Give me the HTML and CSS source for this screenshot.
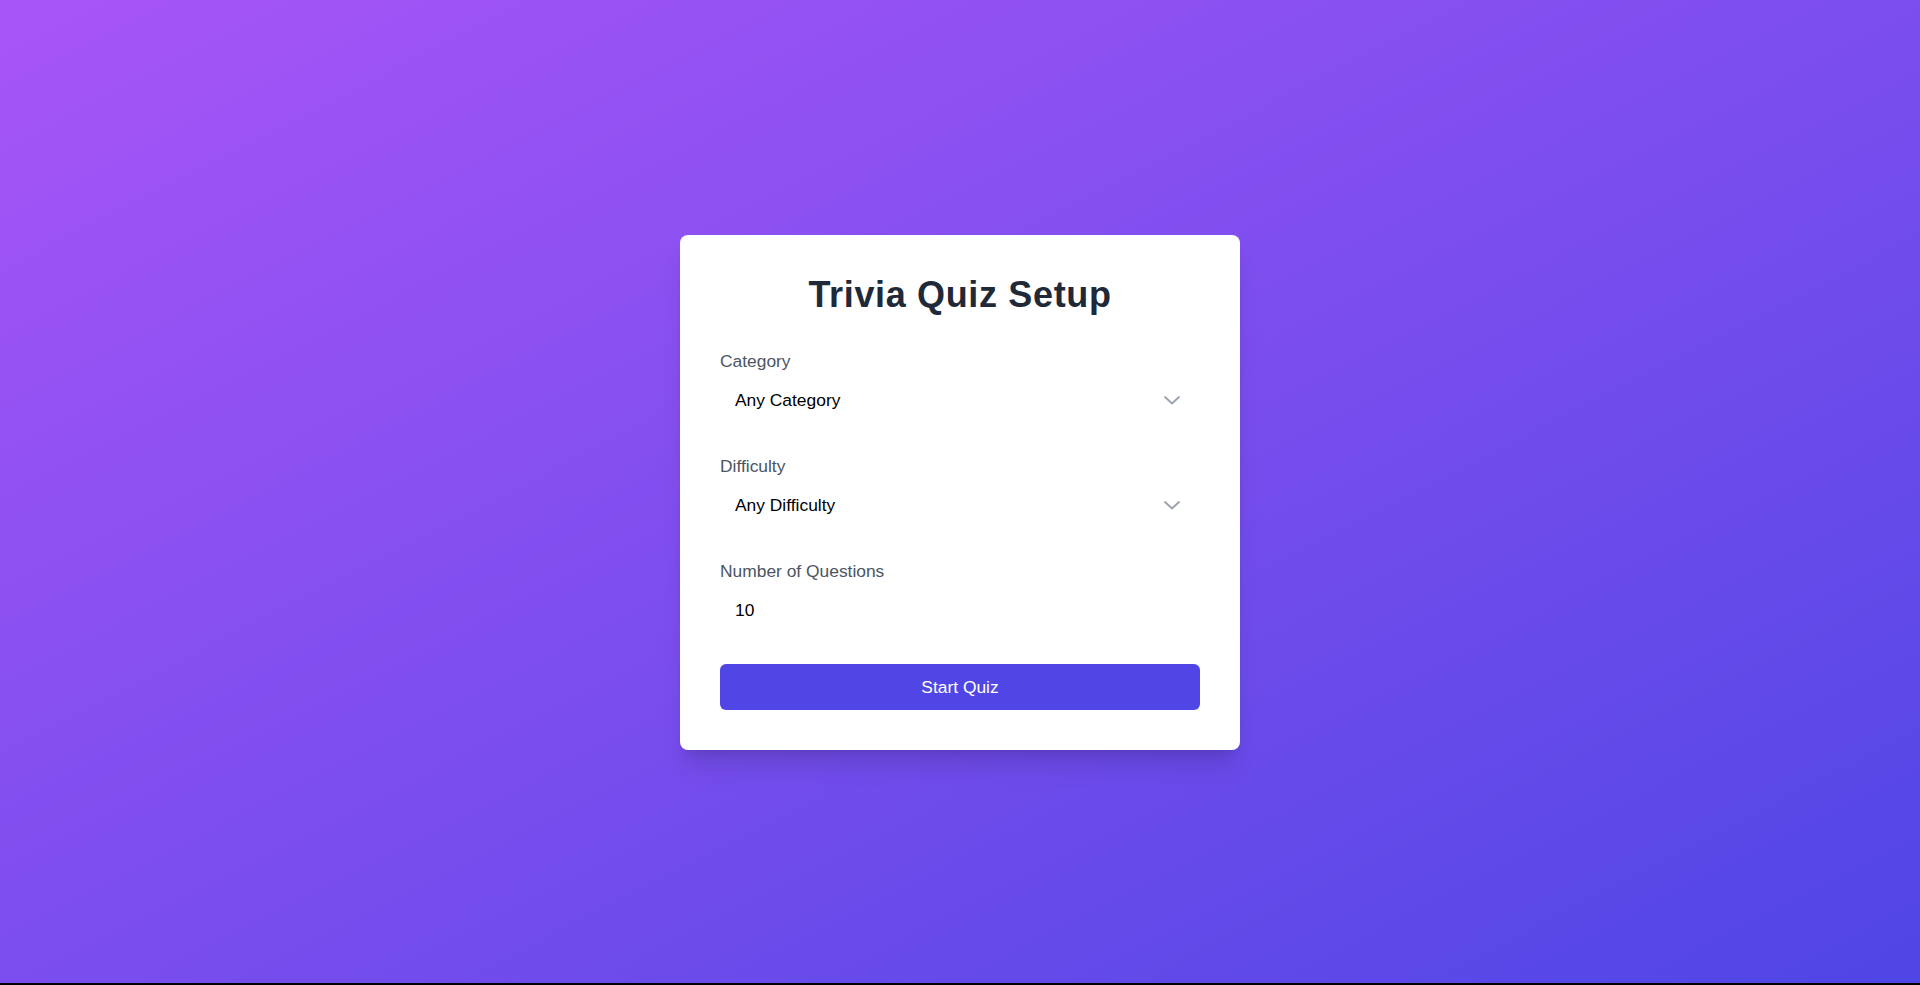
FILE: index.html
```html
<!DOCTYPE html>
<html lang="en">
<head>
<meta charset="utf-8">
<title>Trivia Quiz Setup</title>
<link rel="stylesheet" href="styles.css">
</head>
<body>
<main class="screen">
  <form class="card">
    <h1 class="title">Trivia Quiz Setup</h1>
    <div class="field">
      <label class="label" for="category">Category</label>
      <div class="select-wrap">
        <select id="category" class="control">
          <option>Any Category</option>
        </select>
        <svg class="chevron" width="16" height="9" viewBox="0 0 16 9" aria-hidden="true"><path d="M1 1l7 6.5L15 1" fill="none" stroke="#9aa1ad" stroke-width="1.8" stroke-linecap="round" stroke-linejoin="round"/></svg>
      </div>
    </div>
    <div class="field">
      <label class="label" for="difficulty">Difficulty</label>
      <div class="select-wrap">
        <select id="difficulty" class="control">
          <option>Any Difficulty</option>
        </select>
        <svg class="chevron" width="16" height="9" viewBox="0 0 16 9" aria-hidden="true"><path d="M1 1l7 6.5L15 1" fill="none" stroke="#9aa1ad" stroke-width="1.8" stroke-linecap="round" stroke-linejoin="round"/></svg>
      </div>
    </div>
    <div class="field">
      <label class="label" for="amount">Number of Questions</label>
      <input id="amount" class="control" type="text" value="10">
    </div>
    <button type="button" class="start">Start Quiz</button>
  </form>
</main>
</body>
</html>
```

FILE: styles.css
```css
html {
  background: #000;
}
body {
  margin: 0;
  font-family: "Liberation Sans", Arial, sans-serif;
}
.screen {
  height: 983px;
  background: linear-gradient(to bottom right, #a855f7, #4f46e5);
  display: flex;
  align-items: center;
  justify-content: center;
}
.card {
  width: 560px;
  box-sizing: border-box;
  padding: 40px;
  background: #fff;
  border-radius: 8px;
  box-shadow: 0 20px 25px -5px rgba(0,0,0,0.12), 0 8px 10px -6px rgba(0,0,0,0.1);
  display: flex;
  flex-direction: column;
  margin-top: 2px;
}
.title {
  margin: 0 0 32px;
  font-size: 36px;
  line-height: 40px;
  font-weight: 700;
  letter-spacing: 0.65px;
  color: #1f2937;
  text-align: center;
}
.field {
  display: flex;
  flex-direction: column;
  gap: 4px;
  margin-bottom: 31px;
}
.label {
  font-size: 17.4px;
  line-height: 28px;
  color: #4b5563;
}
.select-wrap {
  position: relative;
}
.control {
  display: block;
  width: 100%;
  height: 42px;
  box-sizing: border-box;
  border: 0;
  outline: none;
  background: #fff;
  padding: 0 15px;
  font-family: "Liberation Sans", Arial, sans-serif;
  font-size: 17.4px;
  color: #000;
  -webkit-appearance: none;
  appearance: none;
  border-radius: 4px;
}
.chevron {
  position: absolute;
  right: 20px;
  top: 17px;
  pointer-events: none;
}
.start {
  margin-top: 2px;
  height: 46px;
  border: 0;
  border-radius: 6px;
  background: #4f46e5;
  color: #fff;
  font-family: "Liberation Sans", Arial, sans-serif;
  font-size: 17.4px;
  cursor: pointer;
}
```
